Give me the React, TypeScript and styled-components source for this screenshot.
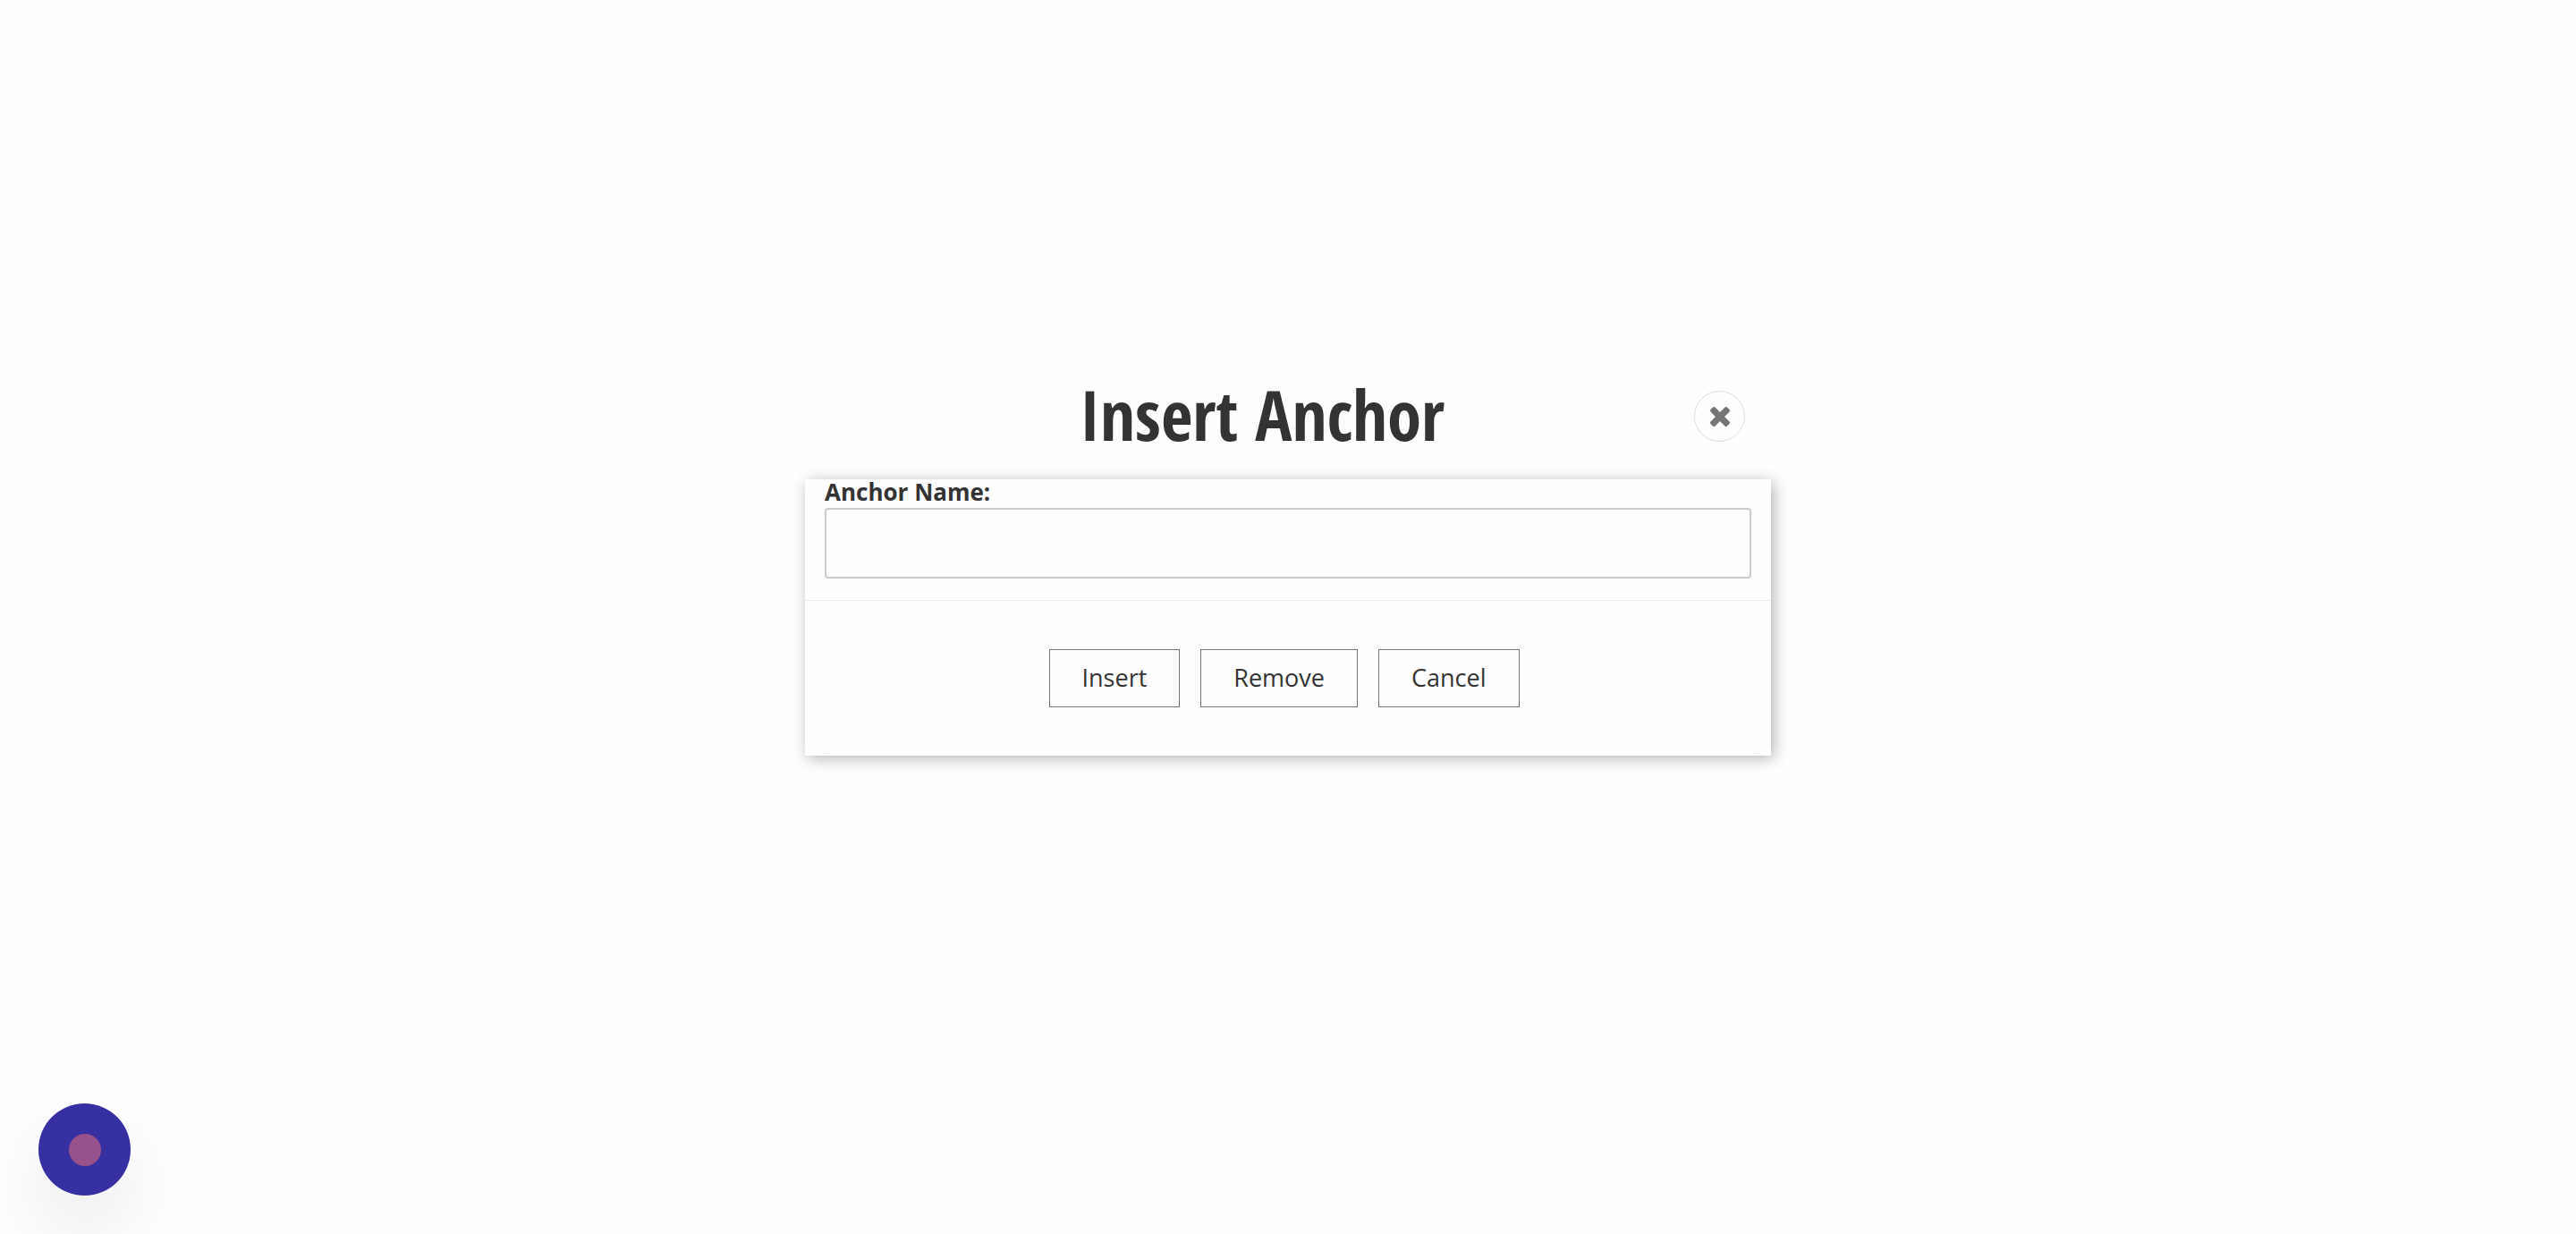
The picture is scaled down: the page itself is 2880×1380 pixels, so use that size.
import React from "react";
import styled, { createGlobalStyle } from "styled-components";

const GlobalStyle = createGlobalStyle`
  *, *::before, *::after { box-sizing: border-box; }
  body {
    margin: 0;
    background: #fefefe;
    color: #333;
    font-family: "Open Sans", "Noto Sans", sans-serif;
  }
`;

const Page = styled.main`
  display: grid;
  grid-template-rows: 1fr auto 1fr;
  justify-content: center;
  grid-template-columns: minmax(0, 1080px);
  min-height: 100vh;
`;

const Header = styled.header`
  display: flex;
  align-items: center;
  align-self: end;
  padding: 0 29px 16px 28px;
`;

const Title = styled.h1`
  flex: 1;
  margin: 0;
  padding-bottom: 4px;
  font-family: "Open Sans Condensed", "Open Sans", sans-serif;
  font-size: 77px;
  font-weight: 700;
  line-height: 104px;
  text-align: center;
`;

const CloseButton = styled.button`
  display: grid;
  place-items: center;
  width: 57px;
  height: 57px;
  padding: 0;
  border: 1px solid #ddd;
  border-radius: 50%;
  background: #fefefe;
  color: #757575;
`;

const Panel = styled.form`
  background: #fefefe;
  box-shadow: 3px 3px 16px rgba(0, 0, 0, 0.3);
`;

const Field = styled.div`
  display: flex;
  flex-direction: column;
  gap: 4px;
  padding: 0 22px 24px;
`;

const Label = styled.label`
  font-size: 26px;
  font-weight: 700;
  line-height: 28px;
`;

const TextInput = styled.input`
  width: 100%;
  height: 79px;
  padding: 0 20px;
  border: 2px solid #ccc;
  border-radius: 4px;
  background: #fefefe;
  color: inherit;
  font: inherit;
  font-size: 27px;
`;

const Actions = styled.div`
  display: flex;
  justify-content: center;
  gap: 23px;
  padding: 54px 9px 54px 0;
  border-top: 1px solid #eee;
`;

const ActionButton = styled.button`
  height: 65px;
  padding: 0 36px;
  border: 1px solid #757575;
  border-radius: 0;
  background: #fefefe;
  color: #333;
  font-family: inherit;
  font-size: 27px;
  line-height: 40px;
`;

const Launcher = styled.button`
  position: fixed;
  left: 43px;
  bottom: 43px;
  display: grid;
  place-items: center;
  width: 103px;
  height: 103px;
  padding: 0;
  border: 0;
  border-radius: 50%;
  background: #3730a3;
  box-shadow: 0 40px 80px rgba(0, 0, 0, 0.08);
`;

const Dot = styled.span`
  width: 36px;
  height: 36px;
  border-radius: 50%;
  background: #98528b;
`;

const CloseIcon = () => (
  <svg width="22" height="22" viewBox="302 366 1188 1188" fill="currentColor" aria-hidden="true">
    <path d="M1490 1322q0 40-28 68l-136 136q-28 28-68 28t-68-28l-294-294-294 294q-28 28-68 28t-68-28l-136-136q-28-28-28-68t28-68l294-294-294-294q-28-28-28-68t28-68l136-136q28-28 68-28t68 28l294 294 294-294q28-28 68-28t68 28l136 136q28 28 28 68t-28 68l-294 294 294 294q28 28 28 68z" />
  </svg>
);

const actions = ["Insert", "Remove", "Cancel"];

export default function App() {
  return (
    <>
      <GlobalStyle />
      <Page>
        <Header>
          <Title>Insert Anchor</Title>
          <CloseButton type="button" aria-label="Close">
            <CloseIcon />
          </CloseButton>
        </Header>
        <Panel onSubmit={(event) => event.preventDefault()}>
          <Field>
            <Label htmlFor="anchor-name">Anchor Name:</Label>
            <TextInput id="anchor-name" type="text" />
          </Field>
          <Actions>
            {actions.map((name) => (
              <ActionButton key={name} type="button">
                {name}
              </ActionButton>
            ))}
          </Actions>
        </Panel>
      </Page>
      <Launcher type="button" aria-label="Open menu">
        <Dot />
      </Launcher>
    </>
  );
}
